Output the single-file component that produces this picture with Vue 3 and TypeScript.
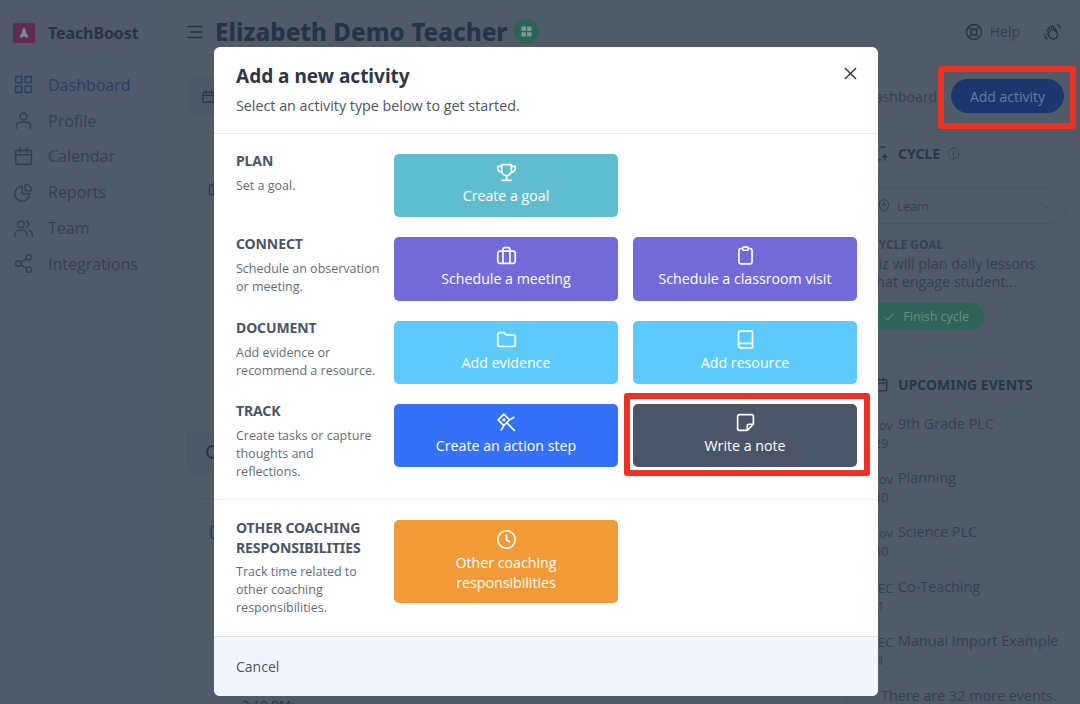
<script setup lang="ts">
interface Action { label: string; icon: string; tone: string }
interface Section { title: string; text: string; actions: Action[] }

const nav = [
  { label: 'Dashboard', icon: 'grid', active: true },
  { label: 'Profile', icon: 'user', active: false },
  { label: 'Calendar', icon: 'calendar', active: false },
  { label: 'Reports', icon: 'pie', active: false },
  { label: 'Team', icon: 'team', active: false },
  { label: 'Integrations', icon: 'share', active: false },
]

const icons: Record<string, string> = {
  grid: 'M3 3h7v7H3zM14 3h7v7h-7zM3 14h7v7H3zM14 14h7v7h-7z',
  user: 'M12 11.5a4 4 0 1 0 0-8 4 4 0 0 0 0 8zM4 21v-2.5a4.5 4.5 0 0 1 4.500-4.500h7a4.500 4.500 0 0 1 4.500 4.500V21',
  calendar: 'M5 5h14a2 2 0 0 1 2 2v12a2 2 0 0 1-2 2H5a2 2 0 0 1-2-2V7a2 2 0 0 1 2-2zM3 10h18M8 2.500V7M16 2.500V7',
  pie: 'M10.500 5a8.500 8.500 0 1 0 8.500 8.500h-8.500zM14 2.500a8 8 0 0 1 7.500 7.500H14z',
  team: 'M9 11a3.800 3.800 0 1 0 0-7.600A3.800 3.800 0 0 0 9 11zM2 21v-2a5 5 0 0 1 5-5h4a5 5 0 0 1 5 5v2M15.500 3.600a3.800 3.800 0 0 1 0 7.200M18.500 14.300a5 5 0 0 1 3.500 4.700v2',
  share: 'M18 8a3 3 0 1 0 0-6 3 3 0 0 0 0 6zM6 15a3 3 0 1 0 0-6 3 3 0 0 0 0 6zM18 22a3 3 0 1 0 0-6 3 3 0 0 0 0 6zM8.600 10.500l6.800-4M8.600 13.500l6.800 4',
  trophy: 'M6.500 3h11v7a5.500 5.500 0 0 1-11 0zM6.500 5H2v2a4.500 4.500 0 0 0 5 4.500M17.500 5H22v2a4.500 4.500 0 0 1-5 4.500M12 15.500V21M7 21h10',
  briefcase: 'M4.500 7h15A2.500 2.500 0 0 1 22 9.500v9a2.500 2.500 0 0 1-2.500 2.500h-15A2.500 2.500 0 0 1 2 18.500v-9A2.500 2.500 0 0 1 4.500 7zM8 7V5a2 2 0 0 1 2-2h4a2 2 0 0 1 2 2v2M8 7v14M16 7v14',
  clipboard: 'M9 4H7a2.500 2.500 0 0 0-2.500 2.500V19A2.500 2.500 0 0 0 7 21.500h10a2.500 2.500 0 0 0 2.500-2.500V6.500A2.500 2.500 0 0 0 17 4h-2M10 2.500h4a1 1 0 0 1 1 1V5a1 1 0 0 1-1 1h-4a1 1 0 0 1-1-1V3.500a1 1 0 0 1 1-1z',
  folder: 'M4.500 4H9l3 3h7.500A2.500 2.500 0 0 1 22 9.500v8a2.500 2.500 0 0 1-2.500 2.500h-15A2.500 2.500 0 0 1 2 17.500v-11A2.500 2.500 0 0 1 4.500 4z',
  book: 'M6.500 2.500H20v19H6.500A2.500 2.500 0 0 1 4 19V5a2.500 2.500 0 0 1 2.500-2.500zM4 19a2.500 2.500 0 0 1 2.500-2.500H20',
  pin: 'M9 2.500L2.500 9 9 15.500 15.500 9zM15.500 9l5-3M9 15.500l-3 5M12.500 12.500l8.500 8.500M9 8.200a.8.8 0 1 0 .1 0z',
  note: 'M5 3h14a2 2 0 0 1 2 2v9l-7 7H5a2 2 0 0 1-2-2V5a2 2 0 0 1 2-2zM21 14h-5a2 2 0 0 0-2 2v5',
  clock: 'M12 22a10 10 0 1 0 0-20 10 10 0 0 0 0 20zM12 7v5.500l3.500 2',
}

const sections: Section[] = [
  { title: 'PLAN', text: 'Set a goal.', actions: [{ label: 'Create a goal', icon: 'trophy', tone: 'teal' }] },
  {
    title: 'CONNECT', text: 'Schedule an observation or meeting.', actions: [
      { label: 'Schedule a meeting', icon: 'briefcase', tone: 'violet' },
      { label: 'Schedule a classroom visit', icon: 'clipboard', tone: 'violet' },
    ],
  },
  {
    title: 'DOCUMENT', text: 'Add evidence or recommend a resource.', actions: [
      { label: 'Add evidence', icon: 'folder', tone: 'sky' },
      { label: 'Add resource', icon: 'book', tone: 'sky' },
    ],
  },
  {
    title: 'TRACK', text: 'Create tasks or capture thoughts and reflections.', actions: [
      { label: 'Create an action step', icon: 'pin', tone: 'blue' },
      { label: 'Write a note', icon: 'note', tone: 'slate' },
    ],
  },
]

const events = [
  { month: 'Nov', day: '29', title: '9th Grade PLC' },
  { month: 'Nov', day: '30', title: 'Planning' },
  { month: 'Nov', day: '30', title: 'Science PLC' },
  { month: 'DEC', day: '1', title: 'Co-Teaching' },
  { month: 'DEC', day: '1', title: 'Manual Import Example' },
]
</script>

<template>
  <div class="page">
    <aside class="sidebar">
      <div class="brand">
        <span class="logo">
          <svg viewBox="0 0 12 12" width="12" height="12"><path d="M6 .5c1.500 1 2 3 2.200 5l1.800 3.500v1.500H7.500L6 9 4.500 10.500H2V9l1.800-3.500C4 3.500 4.500 1.500 6 .5z" fill="#7b8391" /></svg>
        </span>
        <span class="brand-name">TeachBoost</span>
      </div>
      <nav class="nav">
        <a v-for="item in nav" :key="item.label" class="nav-item" :class="{ active: item.active }">
          <svg class="nav-icon" viewBox="0 0 24 24"><path :d="icons[item.icon]" /></svg>
          {{ item.label }}
        </a>
      </nav>
    </aside>

    <main class="main">
      <header class="topbar">
        <div class="title-group">
          <svg class="menu" viewBox="0 0 16 14"><path d="M1 1.500h14M3.500 7H15M1 12.500h14" /></svg>
          <h1>Elizabeth Demo Teacher</h1>
          <span class="status">
            <svg viewBox="0 0 24 24" width="15" height="15"><path d="M4 4h7v7H4zM13 4h7v7h-7zM4 13h7v7H4zM13 13h7v7h-7z" fill="#7f9a93" /></svg>
          </span>
        </div>
        <div class="top-actions">
          <svg class="top-icon" viewBox="0 0 24 24"><path d="M12 22a10 10 0 1 0 0-20 10 10 0 0 0 0 20zM12 16a4 4 0 1 0 0-8 4 4 0 0 0 0 8zM5 5l4 4M19 5l-4 4M5 19l4-4M19 19l-4-4" /></svg>
          <span class="help">Help</span>
          <svg class="wave" viewBox="0 0 24 24"><path d="M8 13L5 9M10 11L7 5.500M13 10L10 4M16 11l-3-7.500M8 13l-2 1c2 6 6 8 10 7 4-2 4-6 2-10l-2-4M2 16c.5 2.500 1.500 4 3.500 5.500M19 1.500c2 1 3.500 3 4 5" /></svg>
        </div>
      </header>

      <div class="toolbar">
        <button class="date-btn">
          <svg viewBox="0 0 24 24" width="15" height="15"><path :d="icons.calendar" /></svg>
        </button>
        <div class="toolbar-right">
          <span class="link">Customize dashboard</span>
          <button class="add-btn">Add activity</button>
        </div>
      </div>

      <div class="content">
        <div class="cards">
          <section class="card first">
            <svg class="card-icon" viewBox="0 0 24 24"><path :d="icons.briefcase" /></svg>
            <div class="card-foot"><span class="ring" /></div>
          </section>
          <section class="card second">
            <svg class="card-icon" viewBox="0 0 24 24"><path :d="icons.clipboard" /></svg>
            <div class="time">2:10 PM:</div>
          </section>
        </div>

        <aside class="rail">
          <div class="rail-head">
            <svg class="rail-icon" viewBox="0 0 24 24"><path d="M6 3v7M3 7l3 3 3-3M12 3h6M18 21v-7M15 17l3-3 3 3M12 21H6" /></svg>
            <h2>CYCLE</h2>
            <svg class="info" viewBox="0 0 24 24"><path d="M12 22a10 10 0 1 0 0-20 10 10 0 0 0 0 20zM12 11v6M12 7v1" /></svg>
          </div>
          <div class="select">
            <svg viewBox="0 0 24 24" width="14" height="14"><path d="M12 22s8-6.500 8-12.500a8 8 0 0 0-16 0C4 15.500 12 22 12 22zM12 12a2.500 2.500 0 1 0 0-5 2.500 2.500 0 0 0 0 5z" /></svg>
            <span>Learn</span>
            <svg class="chev" viewBox="0 0 24 24" width="12" height="12"><path d="M4 8l8 8 8-8" /></svg>
          </div>
          <h3>CYCLE GOAL</h3>
          <p class="goal">Liz will plan daily lessons that engage student...</p>
          <button class="finish">
            <svg viewBox="0 0 24 24" width="12" height="12"><path d="M4 13l5 5L20 6" /></svg>
            Finish cycle
          </button>

          <div class="rail-head events-head">
            <svg class="rail-icon" viewBox="0 0 24 24"><path :d="icons.calendar" /></svg>
            <h2>UPCOMING EVENTS</h2>
          </div>
          <ul class="events">
            <li v-for="(event, i) in events" :key="i" class="event">
              <div class="date"><span>{{ event.month }}</span><span>{{ event.day }}</span></div>
              <span class="event-title">{{ event.title }}</span>
            </li>
          </ul>
          <p class="more">There are 32 more events.</p>
        </aside>
      </div>
    </main>

    <div class="overlay" />

    <div class="modal">
      <header class="modal-head">
        <h2>Add a new activity</h2>
        <p>Select an activity type below to get started.</p>
        <button class="close" aria-label="Close">
          <svg viewBox="0 0 14 14" width="14" height="14"><path d="M1 1l12 12M13 1L1 13" /></svg>
        </button>
      </header>

      <div class="modal-body">
        <div class="rows">
          <section v-for="section in sections" :key="section.title" class="row">
            <div class="row-text">
              <h3>{{ section.title }}</h3>
              <p>{{ section.text }}</p>
            </div>
            <button v-for="action in section.actions" :key="action.label" class="action" :class="action.tone">
              <svg viewBox="0 0 24 24"><path :d="icons[action.icon]" /></svg>
              <span>{{ action.label }}</span>
            </button>
          </section>
        </div>
        <div class="rows other">
          <section class="row">
            <div class="row-text">
              <h3>OTHER COACHING RESPONSIBILITIES</h3>
              <p>Track time related to other coaching responsibilities.</p>
            </div>
            <button class="action orange tall">
              <svg viewBox="0 0 24 24"><path :d="icons.clock" /></svg>
              <span>Other coaching<br />responsibilities</span>
            </button>
          </section>
        </div>
      </div>

      <footer class="modal-foot">Cancel</footer>
    </div>

    <span class="mark mark-add" />
    <span class="mark mark-note" />
  </div>
</template>

<style>
html, body { margin: 0; background: #fff; }
</style>

<style scoped>
* { box-sizing: border-box; }
svg { fill: none; stroke: currentColor; stroke-width: 2; stroke-linecap: round; stroke-linejoin: round; flex: none; }
h1, h2, h3, p, ul { margin: 0; padding: 0; }
button { font: inherit; border: 0; padding: 0; color: inherit; }

.page {
  position: relative;
  width: 1080px;
  height: 704px;
  overflow: hidden;
  display: flex;
  font-family: "Open Sans", sans-serif;
  color: #7c8a9f;
  background: #fff;
}

.sidebar { width: 164px; flex: none; padding: 22px 0 0 13px; background: #fbfcfd; border-right: 1px solid #f0f2f5; }
.brand { display: flex; align-items: center; gap: 13px; height: 21px; }
.logo { width: 22px; height: 20px; background: #5e2c4f; border-radius: 2px; display: flex; align-items: center; justify-content: center; position: relative; z-index: 1; }
.logo svg { stroke: none; }
.brand-name { font: 700 16px "Noto Sans", sans-serif; color: #2d3c52; letter-spacing: -.1px; }
.nav { margin-top: 24px; display: flex; flex-direction: column; }
.nav-item { display: flex; align-items: center; gap: 14px; height: 35.800px; font-size: 16px; color: #727f93; white-space: nowrap; }
.nav-item.active { color: #3a6cff; }
.nav-icon { width: 21px; height: 21px; stroke-width: 1.800; }

.main { flex: 1; min-width: 0; display: flex; flex-direction: column; }
.topbar { height: 66px; padding: 0 19px 3px 23px; display: flex; align-items: center; justify-content: space-between; }
.title-group { display: flex; align-items: center; }
.menu { width: 16px; height: 14px; stroke-width: 1.400; color: #2d3c52; margin-right: 12px; }
h1 { font: 800 24.200px "Noto Sans", sans-serif; color: #2d3c52; white-space: nowrap; line-height: 32px; }
.status { width: 25px; height: 25px; margin-left: 7px; border-radius: 50%; background: #2d6355; display: flex; align-items: center; justify-content: center; position: relative; z-index: 1; }
.status svg { stroke: none; }
.top-actions { display: flex; align-items: center; color: #5d6b80; }
.top-icon { width: 18px; height: 18px; color: #2d3c52; stroke-width: 1.800; margin-right: 7px; }
.help { font-size: 14px; color: #6f7a88; margin-right: 23px; }
.wave { width: 18px; height: 18px; color: #2d3c52; stroke-width: 1.800; }

.toolbar { height: 67px; padding: 12px 16px 0 23px; border-bottom: 1px solid #e8ebef; display: flex; align-items: flex-start; justify-content: space-between; }
.date-btn { width: 120px; height: 36px; border-radius: 6px; background: #eff1f4; display: flex; align-items: center; padding-left: 14px; color: #2d3c52; }
.toolbar-right { display: flex; align-items: center; gap: 14px; height: 36px; }
.link { font-size: 14px; color: #727f93; white-space: nowrap; }
.add-btn { width: 113px; height: 34px; border-radius: 17px; background: #1c376f; color: #6a7b99; font-size: 14px; font-weight: 500; position: relative; z-index: 1; }

.content { flex: 1; min-height: 0; display: flex; }
.cards { flex: 1; padding: 22px 0 0 23px; display: flex; flex-direction: column; gap: 22px; }
.card { border: 1px solid #e8ebef; border-radius: 8px; width: 660px; position: relative; padding: 24px 0 0 20px; }
.card.first { height: 321px; }
.card.second { flex: 1; margin-bottom: -20px; }
.card-icon { width: 17px; height: 17px; color: #2f5fd6; display: block; }
.card-foot { position: absolute; left: 0; right: 0; bottom: 0; height: 44px; background: #f3f5f7; border-radius: 0 0 8px 8px; padding: 14px 0 0 18px; }
.ring { display: block; width: 14px; height: 14px; border: 2px solid #2d3c52; border-radius: 50%; }
.time { position: absolute; top: 197px; left: 54px; font-size: 13px; color: #2d3c52; }

.rail { width: 212px; flex: none; margin-left: -16px; position: relative; }
.rail-head { height: 39px; display: flex; align-items: center; gap: 9px; padding-left: 10px; border-bottom: 1px solid #eceff2; margin-top: 1px; }
.rail-icon { width: 17px; height: 17px; color: #2d3c52; stroke-width: 1.800; margin-left: -6px; }
.rail h2 { font: 700 14px "Noto Sans", sans-serif; color: #3a4a60; white-space: nowrap; }
.info { width: 13px; height: 13px; color: #727f93; stroke-width: 1.800; margin-left: -2px; }
.select { margin: 15px 13px 0 -4px; height: 36px; border: 1px solid #dce0e6; border-radius: 18px; display: flex; align-items: center; gap: 6px; padding: 0 14px 0 12px; font-size: 12px; color: #727f93; }
.chev { margin-left: auto; color: #b5bdc9; }
.rail h3 { font: 700 12px "Noto Sans", sans-serif; color: #727f93; margin: 12px 0 0 3px; }
.goal { font-size: 14.350px; line-height: 18px; width: 190px; color: #727f93; margin: 2px 0 0 3px; }
.finish { margin: 12px 0 0 -4px; width: 120px; height: 27px; border-radius: 14px; background: #2e6558; color: #6f8a84; font-size: 12.500px; font-weight: 500; display: flex; align-items: center; justify-content: flex-end; gap: 8px; padding-right: 15px; position: relative; z-index: 1; }
.events-head { margin-top: 36px; height: 38px; }
.events { list-style: none; }
.event { display: flex; gap: 4px; height: 54.200px; padding-top: 10px; border-bottom: 1px solid #f0f2f5; font-size: 14.350px; color: #727f93; }
.date { width: 26px; font-size: 13px; line-height: 18px; display: flex; flex-direction: column; align-items: center; flex: none; padding-top: 2px; }
.event-title { white-space: nowrap; line-height: 20px; }
.more { font-size: 14.350px; line-height: 14px; color: #727f93; margin: 14px 0 0 13px; white-space: nowrap; }

.overlay { position: absolute; inset: 0; background: rgba(36, 50, 66, .8); }

.modal { position: absolute; z-index: 2; left: 214px; top: 47px; width: 664px; height: 649px; background: #fff; border-radius: 6px; overflow: hidden; display: flex; flex-direction: column; color: #4a5568; }
.modal-head { position: relative; height: 87px; flex: none; padding: 16px 22px 0 22px; border-bottom: 1px solid #e6e9ed; }
.modal-head h2 { font: 700 19px/26px "Noto Sans", sans-serif; color: #2d3748; }
.modal-head p { font-size: 14.300px; line-height: 20px; margin-top: 7px; color: #4a5568; }
.close { position: absolute; top: 20px; right: 21px; width: 13px; height: 13px; background: none; color: #2d3748; display: flex; }
.close svg { width: 13px; height: 13px; stroke-width: 1.500; stroke-linecap: butt; }

.modal-body { flex: 1; min-height: 0; display: flex; flex-direction: column; }
.rows { padding: 20px 21px 0 22px; display: flex; flex-direction: column; gap: 20px; border-bottom: 1px solid #edf0f3; height: 366px; flex: none; }
.other { height: auto; flex: 1; border-bottom: 0; }
.row { display: grid; grid-template-columns: 143px 224px 224px; column-gap: 15px; align-items: start; }
.row-text { margin: -3px -2px 0 0; }
.other .row-text { margin-top: -2px; }
.row-text h3 { font: 700 14px/20px "Noto Sans", sans-serif; color: #4a5568; letter-spacing: -.1px; }
.row-text p { font-size: 12.500px; line-height: 18px; margin-top: 6px; color: #5f6b7c; }
.other .row-text p { margin-top: 5px; }
.action { height: 63.330px; border-radius: 5px; color: #fff; display: flex; flex-direction: column; align-items: center; justify-content: flex-start; padding-top: 8px; font-size: 14.200px; font-weight: 500; line-height: 20px; }
.action svg { width: 21px; height: 21px; stroke-width: 1.900; margin-bottom: 3px; }
.action.tall { height: 83px; padding-top: 9px; }
.teal { background: #5fbecd; }
.violet { background: #716bd9; }
.sky { background: #5ccbfb; }
.blue { background: #3571f6; }
.slate { background: #4a5568; }
.orange { background: #f09b38; }

.modal-foot { height: 60px; flex: none; background: #f2f5fa; border-top: 1px solid #dfe3e8; padding: 20px 22px 0; font-size: 14px; line-height: 20px; color: #4a5568; }

.mark { position: absolute; z-index: 3; border: 6px solid #ee3124; border-radius: 3px; pointer-events: none; }
.mark-add { left: 938px; top: 66px; width: 138px; height: 63px; }
.mark-note { left: 624px; top: 393px; width: 246px; height: 83px; }
</style>
